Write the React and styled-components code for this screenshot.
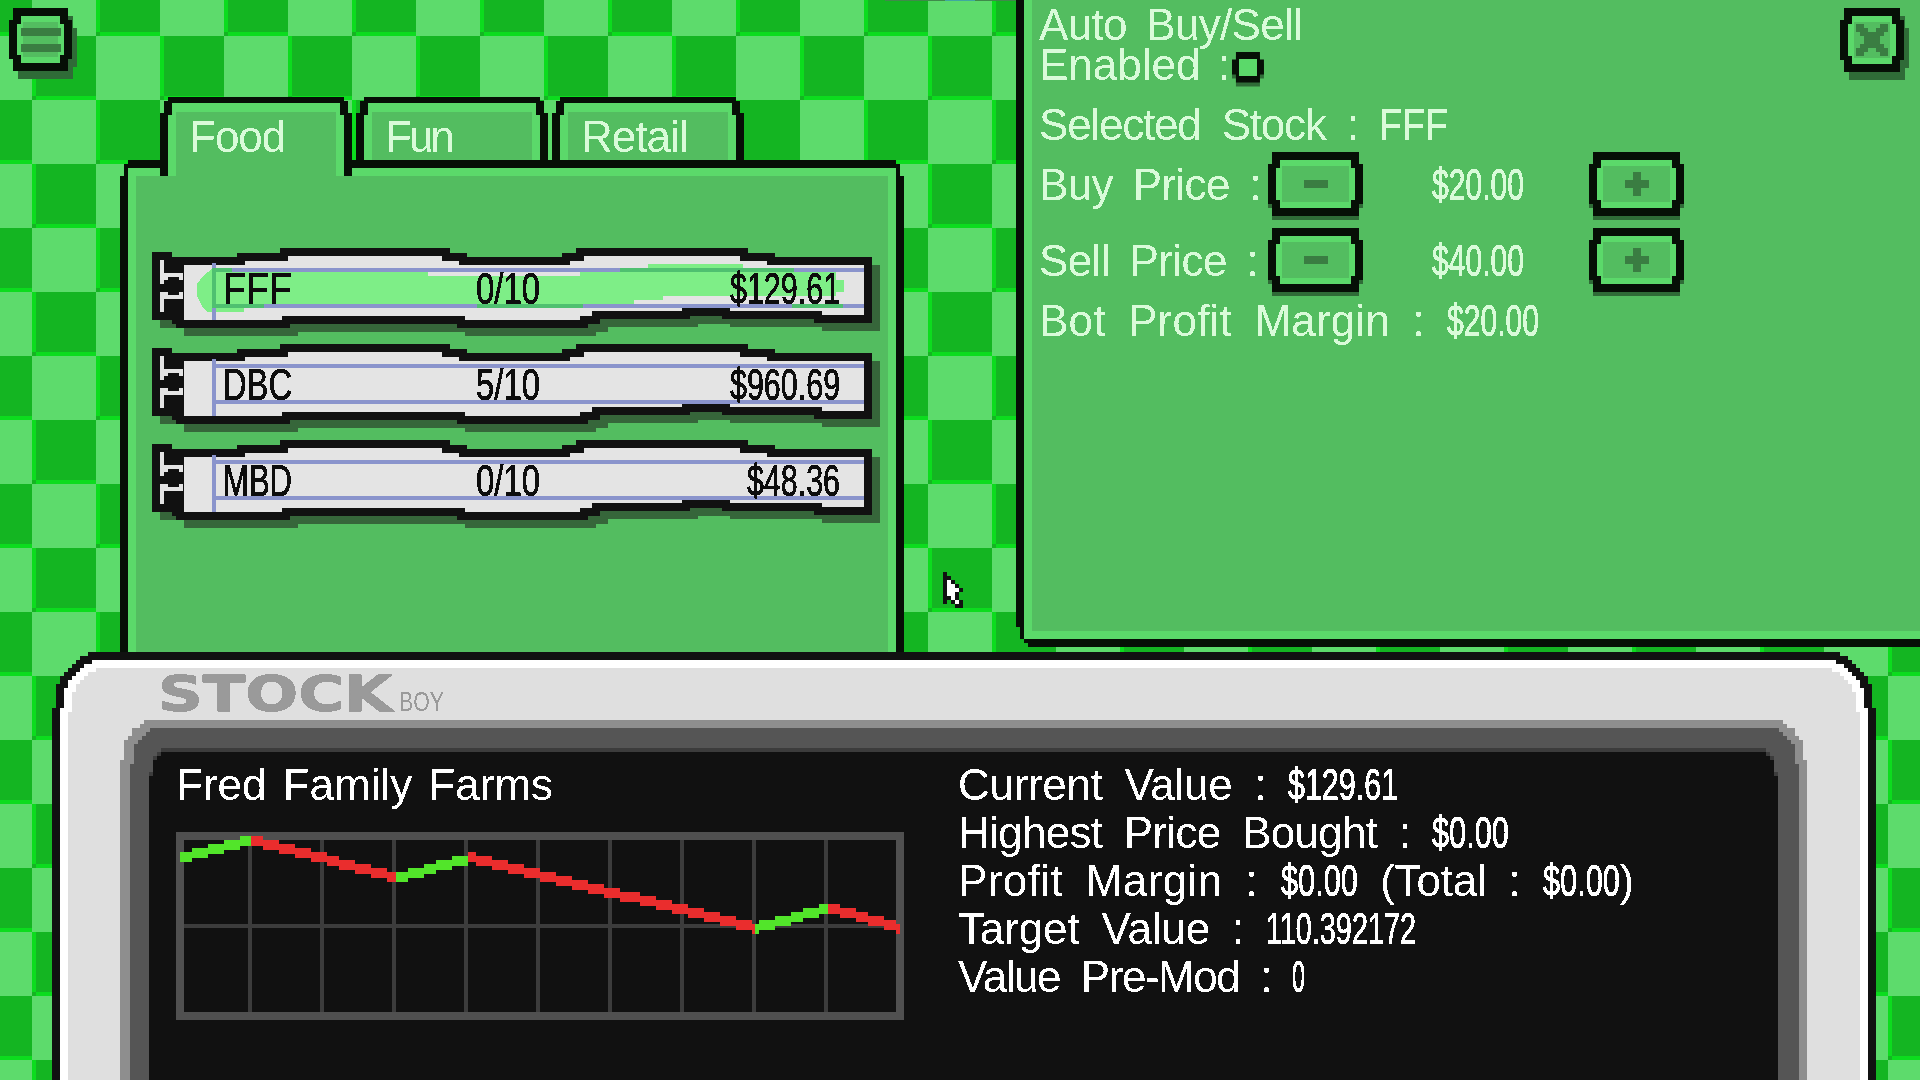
import React from "react";
import styled, { createGlobalStyle } from "styled-components";

// stepped corners, so frames keep the chunky look of the game art
const pixelClip = (r, s = 4, topOnly = false) => {
  const arc = [];
  for (let x = 0; x < r; x += s) {
    const y = r - Math.ceil(Math.sqrt(r * r - (r - x) * (r - x)) / s) * s;
    arc.push([x, y], [x + s, y]);
  }
  const back = [...arc].reverse();
  const tl = arc.map(([x, y]) => `${x}px ${y}px`);
  const tr = back.map(([x, y]) => `calc(100% - ${x}px) ${y}px`);
  const br = arc.map(([x, y]) => `calc(100% - ${x}px) calc(100% - ${y}px)`);
  const bl = back.map(([x, y]) => `${x}px calc(100% - ${y}px)`);
  const bottom = topOnly ? ["100% 100%", "0 100%"] : [...br, ...bl];
  return `polygon(${[...tl, ...tr, ...bottom].join(",")})`;
};

const GlobalStyle = createGlobalStyle`
  html, body { margin: 0; padding: 0; background: #14b522; }
`;

const Screen = styled.div`
  position: relative;
  width: 1920px;
  height: 1080px;
  overflow: hidden;
  font-family: "Liberation Sans", Arial, sans-serif;
  font-size: 44px;
  line-height: 48px;
  background:
    repeating-conic-gradient(transparent 0 25%, #5ddb6c 0 50%) -32px 36px / 128px 128px,
    repeating-conic-gradient(#14b522 0 25%, transparent 0 50%) -28px 32px / 128px 128px,
    #0cdc1e;
`;

const TopEdge = styled.div`
  position: absolute;
  left: 885px;
  top: 0;
  width: 131px;
  height: 1px;
  background: linear-gradient(90deg, #3f8a4a 0 60px, #3fa8a0 0 90px, #3f8a4a 0);
`;

const Txt = styled.div`
  filter: url(#crisp);
  white-space: pre;
  padding-top: 1px;
  margin-bottom: -1px;
  letter-spacing: ${(p) => p.$ls || 0}px;
  word-spacing: ${(p) => p.$ws || 0}px;
`;

const Seg = styled.span`
  letter-spacing: ${(p) => p.$ls}px;
`;

/* the game's digits and stock codes are much narrower than any installed face */
const EM = { ".": 0.278, "/": 0.278, F: 0.611, D: 0.722, B: 0.667, C: 0.722, M: 0.833 };
const naturalWidth = (text) => [...text].reduce((sum, c) => sum + (EM[c] || 0.556) * 44, 0);

const NumBox = styled.span`
  display: inline-block;
  width: ${(p) => p.$w}px;
  letter-spacing: 0;
  word-spacing: 0;
`;

const NumInner = styled.span`
  display: inline-block;
  transform-origin: left center;
  transform: scaleX(${(p) => p.$k});
  -webkit-text-stroke: 0.7px currentColor;
`;

const Num = ({ w, children }) => (
  <NumBox $w={w}>
    <NumInner $k={(w / naturalWidth(children)).toFixed(3)}>{children}</NumInner>
  </NumBox>
);

/* ---- small buttons ---- */
const Shadowed = styled.div`
  filter: drop-shadow(${(p) => p.$shadow || "0 4px 0 #2f6b37"});
`;

const BtnOuter = styled.div`
  width: ${(p) => p.$w || 95}px;
  height: ${(p) => p.$h || 64}px;
  padding: 8px;
  box-sizing: border-box;
  background: #060f06;
  clip-path: ${pixelClip(12)};
`;

const BtnInner = styled.div`
  height: 100%;
  display: flex;
  align-items: center;
  justify-content: center;
  background: #53bd60;
  box-shadow: inset 0 0 0 6px #5bd96a;
  clip-path: ${pixelClip(8)};
`;

const IconBtn = ({ w, h, shadow, children }) => (
  <Shadowed $shadow={shadow}>
    <BtnOuter $w={w} $h={h}>
      <BtnInner>{children}</BtnInner>
    </BtnOuter>
  </Shadowed>
);

const MenuSpot = styled.div`
  position: absolute;
  left: 9px;
  top: 8px;
`;

const CloseSpot = styled.div`
  position: absolute;
  left: 816px;
  top: 24px;
`;

const Glyph = ({ w = 24, h = 24, children }) => (
  <svg width={w} height={h} viewBox={`0 0 ${w} ${h}`} shapeRendering="crispEdges" fill="#3a7d42">
    {children}
  </svg>
);

const MinusIcon = () => (
  <Glyph h={8}>
    <rect width="24" height="8" />
  </Glyph>
);

const PlusIcon = () => (
  <Glyph>
    <rect y="8" width="24" height="8" />
    <rect x="8" width="8" height="24" />
  </Glyph>
);

const MenuIcon = () => (
  <Glyph w={40} h={24}>
    <rect width="40" height="8" />
    <rect y="16" width="40" height="8" />
  </Glyph>
);

const CloseIcon = () => (
  <Glyph w={32} h={32}>
    <path d="M0 0h8v4h4v4h8v-4h4v-4h8v8h-4v4h-4v8h4v4h4v8h-8v-4h-4v-4h-8v4h-4v4h-8v-8h4v-4h4v-8h-4v-4h-4z" />
  </Glyph>
);

/* ---- stock shop window ---- */
const ShopWindow = styled.section`
  position: absolute;
  left: 120px;
  top: 97px;
  width: 784px;
`;

const TabRow = styled.div`
  position: relative;
  z-index: 1;
  display: flex;
  align-items: flex-start;
  gap: 4px;
  height: 63px;
  margin-left: 40px;
`;

const Tab = styled.div`
  width: 192px;
  height: ${(p) => (p.$active ? 79 : 63)}px;
  padding: 6px 8px 0;
  box-sizing: border-box;
  background: #060f06;
  clip-path: ${pixelClip(16, 4, true)};
`;

const TabRing = styled.div`
  height: 100%;
  padding: 9px 8px 0;
  box-sizing: border-box;
  background: #5bd96a;
  clip-path: ${pixelClip(12, 4, true)};
`;

const TabFill = styled.div`
  height: 100%;
  padding-left: 13px;
  background: #53bd60;
  color: #d9fbd9;
`;

const ShopPanel = styled.div`
  height: 560px;
  padding: 8px;
  box-sizing: border-box;
  background: #060f06;
  clip-path: ${pixelClip(16, 4, true)};
`;

const ShopFill = styled.div`
  height: 100%;
  padding: 80px 24px 0;
  box-sizing: border-box;
  background: #53bd60;
  box-shadow: inset 8px 8px 0 #5bd96a, inset -8px 0 0 #5bd96a;
`;

const Row = styled.div`
  position: relative;
  width: 736px;
  height: 96px;
  padding: 16px 48px 0 71px;
  box-sizing: border-box;
  display: grid;
  grid-template-columns: 253px 1fr auto;
  color: #111;
`;

const RowArt = styled.svg`
  position: absolute;
  left: 0;
  top: 0;
`;

const TAPE =
  "28,13 89,13 89,9 132,9 132,4 294,4 294,9 311,9 311,13 414,13 414,9 428,9 428,4 592,4 592,9 619,9 619,13 716,13 716,71 666,71 666,67 574,67 574,64 534,64 534,67 444,67 444,72 432,72 432,76 309,76 309,72 134,72 134,76 28,76";

const SWIPE =
  "45,48 45,36 51,28 56,24 61,20 92,20 92,24 276,24 276,28 428,28 428,24 496,24 496,16 591,16 591,20 642,20 642,24 684,24 684,32 692,32 692,44 684,44 684,48 511,48 511,52 482,52 482,56 112,56 92,56 92,64 56,64 51,60";

const StockTape = ({ selected }) => (
  <RowArt width="736" height="96" viewBox="0 0 736 96" shapeRendering="crispEdges">
    <g transform="translate(8 8)" fill="#36663a">
      <rect y="4" width="24" height="68" />
      <polygon points={TAPE} stroke="#36663a" strokeWidth="8" />
    </g>
    <rect y="4" width="20" height="68" fill="#111" />
    <polygon points={TAPE} fill="#e4e4e4" stroke="#111" strokeWidth="8" />
    <rect x="20" y="9" width="12" height="67" fill="#111" />
    <g fill="#e4e4e4">
      <rect x="8" y="12" width="4" height="24" />
      <rect x="12" y="25" width="19" height="4" />
      <rect x="12" y="29" width="4" height="3" />
      <rect x="27" y="29" width="4" height="3" />
      <rect x="8" y="44" width="4" height="20" />
      <rect x="12" y="47" width="19" height="4" />
      <rect x="12" y="44" width="4" height="3" />
      <rect x="27" y="44" width="4" height="3" />
    </g>
    {selected && <polygon points={SWIPE} fill="#7eee87" />}
    <g fill="#8a94cc">
      <rect x="60" y="15" width="4" height="57" />
      <rect x="64" y="20" width="648" height="4" />
      <rect x="64" y="56" width="648" height="4" />
    </g>
    {selected && (
      <g fill="#4fc070">
        <rect x="60" y="20" width="4" height="40" />
        <rect x="64" y="20" width="16" height="4" />
        <rect x="468" y="20" width="174" height="4" />
        <rect x="64" y="56" width="48" height="4" />
        <rect x="325" y="56" width="106" height="4" />
        <rect x="640" y="56" width="51" height="4" />
      </g>
    )}
  </RowArt>
);

const RowText = styled(Txt)`
  position: relative;
`;

const stocks = [
  { name: "FFF", owned: "0/10", price: "$129.61", priceW: 110, selected: true },
  { name: "DBC", owned: "5/10", price: "$960.69", priceW: 110 },
  { name: "MBD", owned: "0/10", price: "$48.36", priceW: 93 },
];

/* ---- auto buy/sell window ---- */
const AutoWindow = styled.section`
  position: absolute;
  left: 1016px;
  top: -24px;
  width: 944px;
  height: 671px;
  padding: 8px;
  box-sizing: border-box;
  background: #060f06;
  clip-path: ${pixelClip(20)};
`;

const AutoFill = styled.div`
  position: relative;
  height: 100%;
  padding: 16px 15px 0;
  box-sizing: border-box;
  background: #53bd60;
  box-shadow: inset 8px 0 0 #5bd96a, inset 0 -8px 0 #5bd96a;
  color: #d9fbd9;
`;

const TitleLine = styled(Txt)`
  height: 40px;
`;

const EnabledLine = styled.div`
  display: flex;
  align-items: center;
  height: 48px;
  margin-bottom: 12px;
`;

const CheckOuter = styled.div`
  width: 32px;
  height: 31px;
  margin-left: 2px;
  margin-top: 6px;
  padding: 7px;
  box-sizing: border-box;
  background: #060f06;
  clip-path: ${pixelClip(8)};
`;

const CheckFill = styled.div`
  height: 100%;
  background: #5bd96a;
`;

const PriceRow = styled.div`
  display: grid;
  grid-template-columns: 229px 95px 226px 95px;
  align-items: center;
  height: 64px;
  margin-top: ${(p) => p.$top}px;
`;

const PriceValue = styled(Txt)`
  padding-left: 69px;
`;

const MarginLine = styled(Txt)`
  margin-top: 4px;
`;

const Cursor = styled.svg`
  position: absolute;
  left: 943px;
  top: 572px;
`;

const ARROW = ["X....", "XX...", "XWX..", "XWWX.", "XWWWX", "XWWX.", "XXWX.", "X.XWX", "...XX"];

/* ---- stock boy device ---- */
const Device = styled.section`
  position: absolute;
  left: 52px;
  top: 652px;
  width: 1824px;
  height: 540px;
  padding: 8px;
  box-sizing: border-box;
  background: #111;
  clip-path: ${pixelClip(56)};
`;

const DeviceRim = styled.div`
  height: 100%;
  padding: 8px 8px 0;
  box-sizing: border-box;
  background: #fff;
  clip-path: ${pixelClip(48)};
`;

const DeviceBody = styled.div`
  height: 100%;
  padding: 8px 53px 0 52px;
  box-sizing: border-box;
  background: #dfdfdf;
  clip-path: ${pixelClip(44)};
`;

const Logo = styled.div`
  height: 44px;
  padding-left: 38px;
  display: flex;
  align-items: flex-start;
  color: #9a9a9a;
`;

const LogoBig = styled(Txt)`
  width: 241px;
  height: 36px;
  font-family: "DejaVu Sans", sans-serif;
  font-weight: 700;
  font-size: 49px;
  line-height: 36px;
  -webkit-text-stroke: 1px currentColor;
  span {
    display: inline-block;
    transform-origin: left center;
    transform: scaleX(1.27);
  }
`;

const LogoSmall = styled(Txt)`
  margin-top: 15px;
  font-size: 28px;
  line-height: 20px;
  span {
    display: inline-block;
    transform-origin: left center;
    transform: scaleX(0.76);
  }
`;

const BezelLight = styled.div`
  height: 400px;
  padding: 8px 8px 0 10px;
  box-sizing: border-box;
  background: #8e8e8e;
  clip-path: ${pixelClip(40)};
`;

const BezelDark = styled.div`
  height: 100%;
  padding: 20px 21px 0 19px;
  box-sizing: border-box;
  background: #555;
  clip-path: ${pixelClip(36)};
`;

const ScreenEdge = styled.div`
  height: 100%;
  padding-top: 4px;
  box-sizing: border-box;
  background: #3c3c3c;
  clip-path: ${pixelClip(24)};
`;

const Lcd = styled.div`
  height: 100%;
  padding: 8px 0 0 27px;
  box-sizing: border-box;
  background: #111;
  color: #fff;
  display: grid;
  grid-template-columns: 729px 1fr;
  column-gap: 53px;
  align-content: start;
  clip-path: ${pixelClip(24)};
`;

const ChartWrap = styled.div`
  margin-top: 24px;
  line-height: 0;
`;

const chartPoints = [
  [4, 21],
  [75, 3],
  [220, 41],
  [292, 21],
  [579, 91],
  [652, 71],
  [722, 91],
];

// the line is built from narrow columns, so it stairs like the sprite
const LineChart = () => {
  const cells = [];
  chartPoints.slice(1).forEach(([x1, y1], i) => {
    const [x0, y0] = chartPoints[i];
    for (let x = x0; x < x1; x += 4) {
      const y = y0 + ((y1 - y0) * (x - x0)) / (x1 - x0);
      cells.push(
        <rect key={x} x={x} y={Math.round(y / 4) * 4} width="4" height="10" fill={y1 < y0 ? "#52e52a" : "#ea2d2d"} />
      );
    }
  });
  return (
    <svg width="728" height="188" viewBox="0 0 728 188" shapeRendering="crispEdges">
      {[72, 144, 216, 288, 360, 432, 504, 576, 648].map((x) => (
        <rect key={x} x={x} y="8" width="4" height="172" fill="#3c3c3c" />
      ))}
      <rect x="8" y="92" width="712" height="4" fill="#3c3c3c" />
      <path d="M0 0h728v188h-728zM8 8v172h712v-172z" fill="#505050" fillRule="evenodd" />
      {cells}
    </svg>
  );
};

export default function App() {
  return (
    <Screen>
      <GlobalStyle />
      <svg width="0" height="0" style={{ position: "absolute" }}>
        <filter id="crisp">
          <feComponentTransfer>
            <feFuncA type="discrete" tableValues="0 1" />
          </feComponentTransfer>
        </filter>
      </svg>
      <TopEdge />

      <MenuSpot>
        <IconBtn w={63} h={63} shadow="5px 8px 0 #2f6b37">
          <MenuIcon />
        </IconBtn>
      </MenuSpot>

      <ShopWindow>
        <TabRow>
          {["Food", "Fun", "Retail"].map((t, i) => (
            <Tab key={t} $active={i === 0}>
              <TabRing>
                <TabFill>
                  <Txt $ls={t === "Fun" ? -3 : -1}>{t}</Txt>
                </TabFill>
              </TabRing>
            </Tab>
          ))}
        </TabRow>
        <ShopPanel>
          <ShopFill>
            {stocks.map((s) => (
              <Row key={s.name}>
                <StockTape selected={s.selected} />
                <RowText>
                  <Num w={69}>{s.name}</Num>
                </RowText>
                <RowText>
                  <Num w={64}>{s.owned}</Num>
                </RowText>
                <RowText>
                  <Num w={s.priceW}>{s.price}</Num>
                </RowText>
              </Row>
            ))}
          </ShopFill>
        </ShopPanel>
      </ShopWindow>

      <AutoWindow>
        <AutoFill>
          <TitleLine $ls={-0.7} $ws={8}>Auto Buy/Sell</TitleLine>
          <EnabledLine>
            <Txt $ws={5}>Enabled :</Txt>
            <Shadowed $shadow="0 4px 0 #2f6b37">
              <CheckOuter>
                <CheckFill />
              </CheckOuter>
            </Shadowed>
          </EnabledLine>
          <Txt $ls={-1.2} $ws={10}>
            Selected Stock : <Num w={69}>FFF</Num>
          </Txt>
          <PriceRow $top={4}>
            <Txt $ls={-0.6} $ws={8}>Buy Price :</Txt>
            <IconBtn>
              <MinusIcon />
            </IconBtn>
            <PriceValue>
              <Num w={92}>$20.00</Num>
            </PriceValue>
            <IconBtn>
              <PlusIcon />
            </IconBtn>
          </PriceRow>
          <PriceRow $top={12}>
            <Txt $ls={-0.6} $ws={8}>Sell Price :</Txt>
            <IconBtn>
              <MinusIcon />
            </IconBtn>
            <PriceValue>
              <Num w={92}>$40.00</Num>
            </PriceValue>
            <IconBtn>
              <PlusIcon />
            </IconBtn>
          </PriceRow>
          <MarginLine $ls={0.2} $ws={10}>
            Bot Profit Margin : <Num w={92}>$20.00</Num>
          </MarginLine>
          <CloseSpot>
            <IconBtn w={64} h={64} shadow="5px 8px 0 #2f6b37">
              <CloseIcon />
            </IconBtn>
          </CloseSpot>
        </AutoFill>
      </AutoWindow>

      <Cursor width="20" height="36" viewBox="0 0 20 36" shapeRendering="crispEdges">
        {ARROW.map((line, y) =>
          line.split("").map((c, x) =>
            c === "." ? null : (
              <rect key={`${x}-${y}`} x={x * 4} y={y * 4} width="4" height="4" fill={c === "X" ? "#111" : "#fff"} />
            )
          )
        )}
      </Cursor>

      <Device>
        <DeviceRim>
          <DeviceBody>
            <Logo>
              <LogoBig>
                <span>STOCK</span>
              </LogoBig>
              <LogoSmall>
                <span>BOY</span>
              </LogoSmall>
            </Logo>
            <BezelLight>
              <BezelDark>
                <ScreenEdge>
                  <Lcd>
                    <div>
                      <Txt $ws={4}>Fred Family Farms</Txt>
                      <ChartWrap>
                        <LineChart />
                      </ChartWrap>
                    </div>
                    <div>
                      <Txt $ls={-0.3} $ws={10}>
                        Current Value : <Num w={110}>$129.61</Num>
                      </Txt>
                      <Txt $ls={-0.7} $ws={10}>
                        Highest Price Bought : <Num w={77}>$0.00</Num>
                      </Txt>
                      <Txt $ls={0.4} $ws={10}>
                        Profit Margin : <Num w={77}>$0.00</Num> <Seg $ls={-0.2}>(Total : </Seg>
                        <Num w={77}>$0.00</Num>)
                      </Txt>
                      <Txt $ls={-0.15} $ws={10}>
                        Target Value : <Num w={152}>110.392172</Num>
                      </Txt>
                      <Txt $ls={-1.45} $ws={10}>
                        Value Pre-Mod : <Num w={13}>0</Num>
                      </Txt>
                    </div>
                  </Lcd>
                </ScreenEdge>
              </BezelDark>
            </BezelLight>
          </DeviceBody>
        </DeviceRim>
      </Device>
    </Screen>
  );
}
